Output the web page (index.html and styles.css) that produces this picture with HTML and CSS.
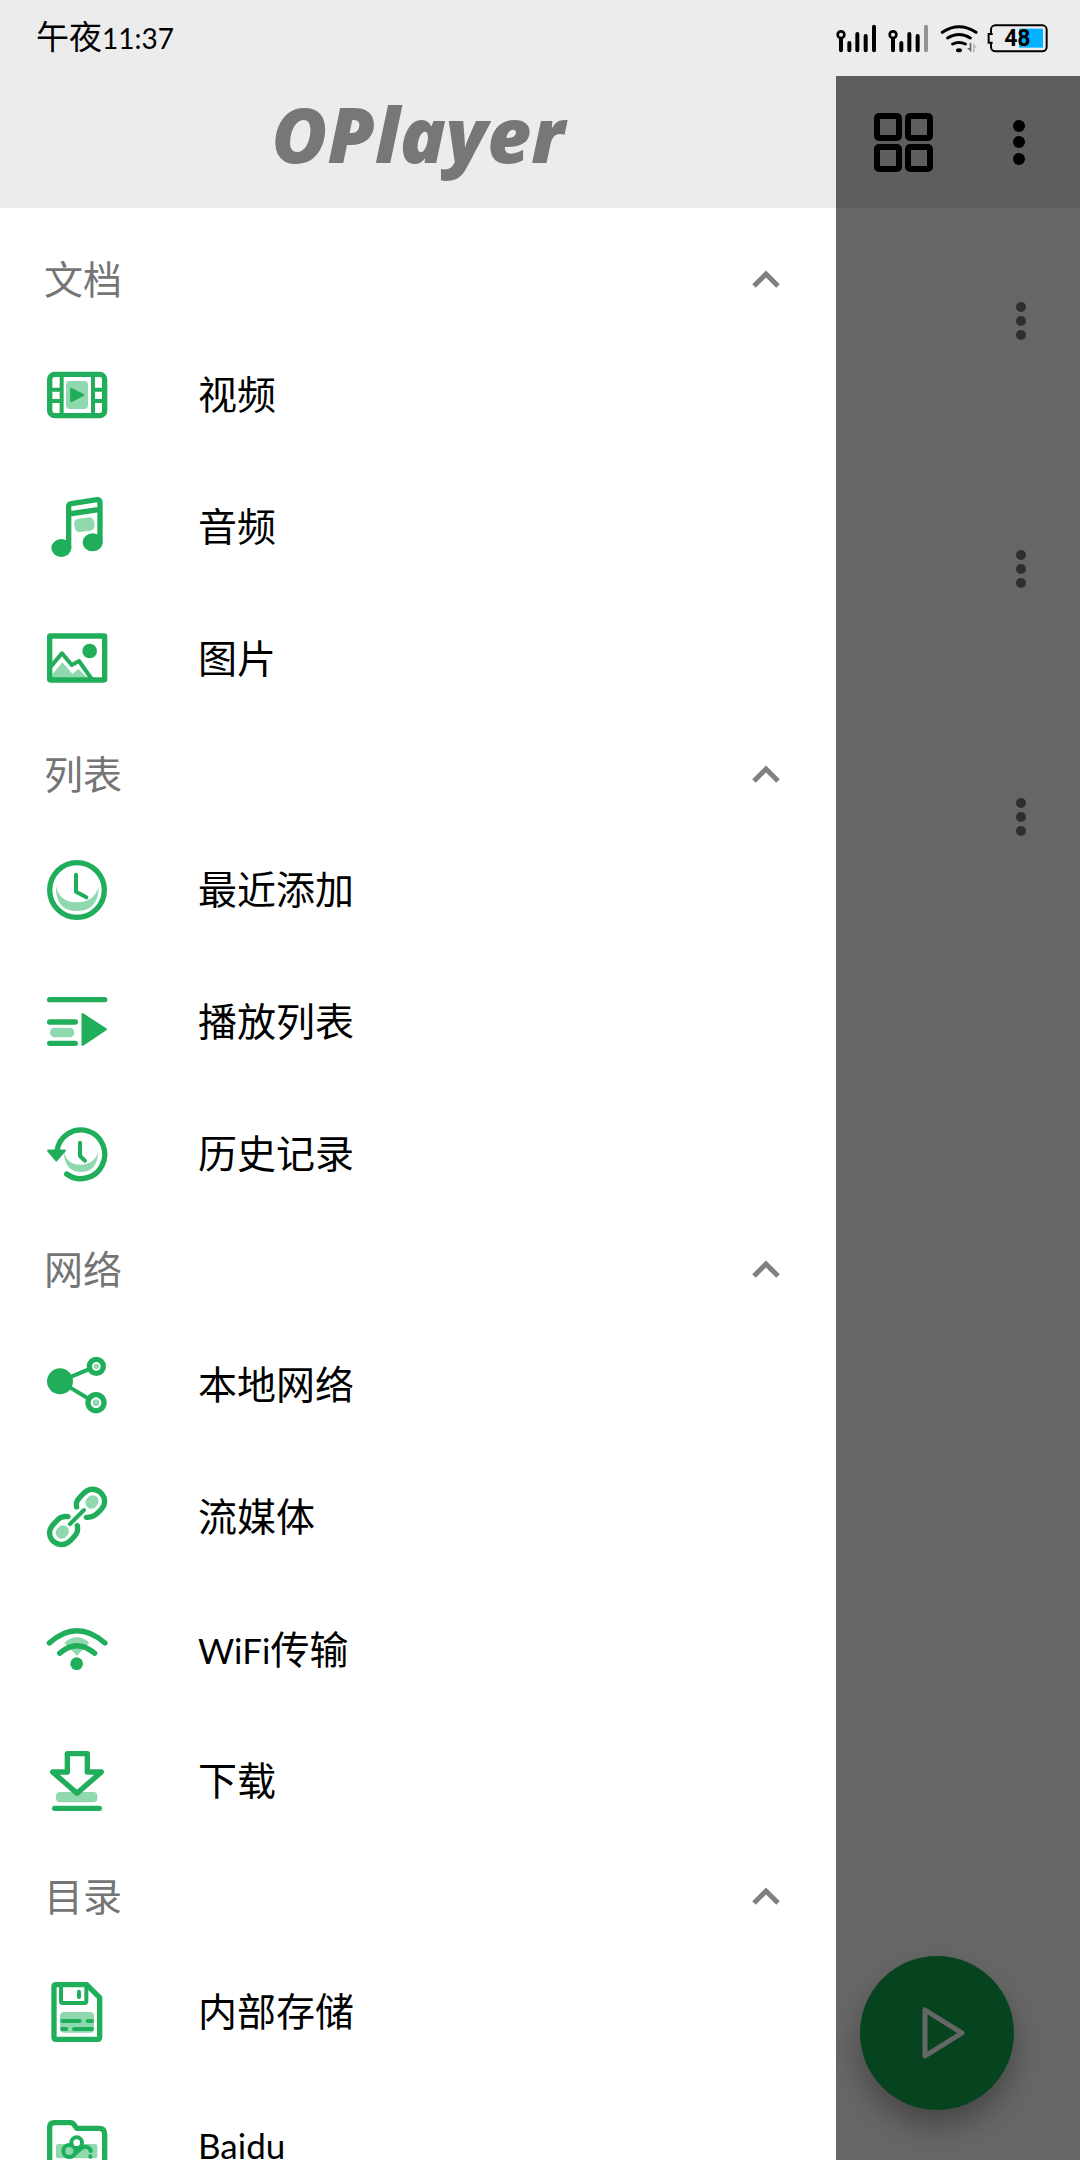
FILE: index.html
```html
<!DOCTYPE html>
<html lang="zh-CN">
<head>
<meta charset="utf-8">
<meta name="viewport" content="width=device-width, initial-scale=1">
<title>OPlayer</title>
<link rel="stylesheet" href="styles.css">
</head>
<body>
<header class="status">
  <span class="clock">午夜<span class="digits">11:37</span></span>
  <svg class="status-icons" viewBox="105 60 645 105" aria-label="信号 Wi-Fi 电量">
    <g fill="none" stroke="#000" stroke-width="12" stroke-linecap="round">
      <circle cx="123" cy="101" r="10" stroke-width="8"/>
      <path d="M123 114V148M148 126V148M172 99V148M197 105V148M222 77V148"/>
      <circle cx="279" cy="101" r="10" stroke-width="8"/>
      <path d="M279 114V148M304 126V148M328 99V148M353 105V148"/>
      <path d="M378 77V148" stroke="#929292"/>
      <path d="M427 94Q477 60 528 94M443 111Q477 90 511 111M458 129Q477 120 496 129" stroke-width="9"/>
    </g>
    <ellipse cx="477" cy="148" rx="9" ry="6"/>
    <path d="M509 126h5v28l-13-13h8z" fill="#666"/>
    <path d="M519 154v-28l12 14h-7v14z" fill="#bbb"/>
    <path d="M657 83h72v57h-72z" fill="#00b2ff"/>
    <rect x="573" y="73" width="167" height="78" rx="13" fill="none" stroke="#000" stroke-width="6"/>
    <path d="M571 99v26" stroke="#ececec" stroke-width="10"/>
    <path d="M578 99h-12v26h12" fill="none" stroke="#000" stroke-width="6"/>
    <text class="battery-text" x="652" y="136" text-anchor="middle">48</text>
  </svg>
</header>

<div class="app">
  <aside class="drawer">
    <div class="brand"><h1 class="logo">OPlayer</h1></div>
    <nav class="menu">
      <section>
        <button class="group" type="button" aria-expanded="true">文档<svg class="chevron" viewBox="0 0 36 36"><path d="M6 23 18 11 30 23"/></svg></button>
        <a class="item" href="#video"><svg class="icon" viewBox="123 390 216 216">
          <rect class="line" x="149" y="433" width="165" height="124" rx="15"/>
          <path class="line thin" d="M185 433v124M279 433v124M149 479h36M149 513h36M279 479h35M279 513h35"/>
          <rect class="tint" x="198" y="453" width="66" height="84" rx="11"/>
          <path class="solid round" d="M214 477v36l35-18z"/></svg>视频</a>
        <a class="item" href="#audio"><svg class="icon" viewBox="123 786 216 216">
          <rect class="tint" x="223" y="864" width="60" height="40" rx="14" transform="rotate(-7 253 884)"/>
          <path class="line" d="M206 953V829q0-7 8-8l77-12q9-1 9 8V936M206 852l94-14"/>
          <ellipse class="solid" cx="184" cy="954" rx="30" ry="27"/><ellipse class="solid" cx="278" cy="937" rx="30" ry="27"/></svg>音频</a>
        <a class="item" href="#image"><svg class="icon" viewBox="123 1182 216 216">
          <path class="tint" d="M156 1345v-11l31-37 31 35 17-15 29 28z"/>
          <path class="line thin" d="M149 1314 186 1270 215 1305 237 1293 277 1350" stroke-linejoin="miter"/>
          <rect class="line" x="149" y="1218" width="165" height="132" rx="2"/>
          <circle class="solid" cx="269" cy="1263" r="22"/></svg>图片</a>
      </section>
      <section>
        <button class="group" type="button" aria-expanded="true">列表<svg class="chevron" viewBox="0 0 36 36"><path d="M6 23 18 11 30 23"/></svg></button>
        <a class="item" href="#recent"><svg class="icon" viewBox="123 405 216 216">
          <circle class="line" cx="231" cy="510" r="82"/>
          <path class="tint" d="M168 497Q178 547 231 547T296 499Q296 573 231 573T168 497z"/>
          <path class="line thin" d="M228 464V515L259 532"/></svg>最近添加</a>
        <a class="item" href="#playlist"><svg class="icon" viewBox="123 801 216 216">
          <path class="line" d="M149 839H314M149 906H226M149 970H226"/>
          <rect class="tint" x="150" y="923" width="73" height="29" rx="14"/>
          <path class="solid round" d="M248 883v91l69-46z"/></svg>播放列表</a>
        <a class="item" href="#history"><svg class="icon" viewBox="123 1197 216 216">
          <path class="line" d="M171 1293A72 73 0 1 1 200 1362"/>
          <path class="solid round" d="M145 1292h49l-25 29z"/>
          <path class="tint" d="M191 1295Q202 1334 242 1334T294 1297Q292 1356 243 1356T191 1295z"/>
          <path class="line thin" d="M240 1268V1308L255 1322"/></svg>历史记录</a>
      </section>
      <section>
        <button class="group" type="button" aria-expanded="true">网络<svg class="chevron" viewBox="0 0 36 36"><path d="M6 23 18 11 30 23"/></svg></button>
        <a class="item" href="#local"><svg class="icon" viewBox="123 390 216 216">
          <path class="line thin" d="M180 484 264 449M180 484 262 534"/>
          <circle class="solid" cx="180" cy="484" r="39"/>
          <circle class="line hole" cx="289" cy="439" r="21"/><circle class="tint" cx="289" cy="439" r="8"/>
          <circle class="line hole" cx="288" cy="548" r="24"/><circle class="tint" cx="288" cy="548" r="10"/></svg>本地网络</a>
        <a class="item" href="#stream"><svg class="icon" viewBox="123 786 216 216">
          <rect class="tint" x="-18" y="-21" width="36" height="42" rx="18" transform="translate(276 846) rotate(42)"/>
          <rect class="tint" x="-18" y="-21" width="36" height="42" rx="18" transform="translate(187 936) rotate(42)"/>
          <path class="line" d="M230 861C226 846 233 838 248 823 266 803 287 804 302 818 319 835 317 854 302 870 286 887 276 893 259 892M204 890C185 887 176 895 164 909 146 926 144 945 157 961 174 978 195 978 212 961 227 945 236 938 232 917"/>
          <path class="line thin" d="M210 912 252 870"/></svg>流媒体</a>
        <a class="item" href="#wifi"><svg class="icon" viewBox="123 102 216 216">
          <path class="tint" d="M193 188Q231 156 268 188L231 227z"/>
          <path class="line" d="M148 189Q230 116 315 189M179 220Q230 174 284 220"/>
          <circle class="solid" cx="230" cy="251" r="19"/></svg><span><span class="latin">WiFi</span>传输</span></a>
        <a class="item" href="#download"><svg class="icon" viewBox="123 498 216 216">
          <rect class="tint" x="168" y="636" width="124" height="31" rx="12"/>
          <path class="line hole" d="M202 521h60v55h42L231 640 158 576h44z"/>
          <path class="line" d="M164 685H298"/></svg>下载</a>
      </section>
      <section>
        <button class="group" type="button" aria-expanded="true">目录<svg class="chevron" viewBox="0 0 36 36"><path d="M6 23 18 11 30 23"/></svg></button>
        <a class="item" href="#storage"><svg class="icon" viewBox="123 351 216 216">
          <path class="line" d="M168 374h92l39 39v119q0 6-6 6H168q-6 0-6-6V380q0-6 6-6z"/>
          <path class="line thin" d="M183 375v49q0 5 5 5h66q5 0 5-5v-49M237 395v16"/>
          <rect class="tint" x="180" y="456" width="102" height="62" rx="12"/>
          <path class="line thin" d="M187 483h52M263 483h13M187 507h12M222 507h54"/></svg>内部存储</a>
        <a class="item" href="#baidu"><svg class="icon" viewBox="123 747 216 216">
          <path class="line" d="M149 920V802q0-14 14-14h48q7 0 12 7l7 10h67q17 0 17 17v98q0 14-14 14H163q-14 0-14-14z"/>
          <rect class="tint" x="168" y="852" width="124" height="43" rx="6"/>
          <circle class="line thin" cx="208" cy="873" r="18"/>
          <circle class="line thin hole" cx="230" cy="848" r="16"/>
          <path class="line thin" d="M220 887 240 868Q252 856 263 862 271 866 272 873M271 889v1"/></svg><span class="latin">Baidu</span></a>
      </section>
    </nav>
  </aside>

  <main class="page">
    <div class="toolbar">
      <button class="tool" type="button" aria-label="网格视图"><svg class="tool-icon" viewBox="0 0 60 60"><g fill="none" stroke="#000" stroke-width="6"><rect x="3" y="4" width="22" height="22" rx="2"/><rect x="34" y="4" width="22" height="22" rx="2"/><rect x="3" y="35" width="22" height="22" rx="2"/><rect x="34" y="35" width="22" height="22" rx="2"/></g></svg></button>
      <button class="tool" type="button" aria-label="更多"><svg class="tool-icon" viewBox="0 0 60 60"><circle cx="30" cy="14" r="6"/><circle cx="30" cy="30" r="6"/><circle cx="30" cy="47" r="6"/></svg></button>
    </div>
    <ul class="files">
      <li><button class="more" type="button" aria-label="选项"><svg viewBox="0 0 48 48"><circle cx="24" cy="10" r="5"/><circle cx="24" cy="24" r="5"/><circle cx="24" cy="38" r="5"/></svg></button></li>
      <li><button class="more" type="button" aria-label="选项"><svg viewBox="0 0 48 48"><circle cx="24" cy="10" r="5"/><circle cx="24" cy="24" r="5"/><circle cx="24" cy="38" r="5"/></svg></button></li>
      <li><button class="more" type="button" aria-label="选项"><svg viewBox="0 0 48 48"><circle cx="24" cy="10" r="5"/><circle cx="24" cy="24" r="5"/><circle cx="24" cy="38" r="5"/></svg></button></li>
    </ul>
    <button class="fab" type="button" aria-label="播放"><svg viewBox="0 0 154 154"><path d="M65 54v46l37-23z"/></svg></button>
    <div class="scrim"></div>
  </main>
</div>
</body>
</html>
```
FILE: styles.css
```css
* { box-sizing: border-box; }

body {
  margin: 0;
  height: 100vh;
  display: flex;
  flex-direction: column;
  overflow: hidden;
  background: #ececec;
  color: #000;
  font-family: "Liberation Sans", "Noto Sans CJK SC", sans-serif;
}

button {
  margin: 0;
  padding: 0;
  border: 0;
  background: none;
  font: inherit;
  color: inherit;
}

svg { display: block; }

.status {
  flex: none;
  height: 76px;
  padding: 0 30px 0 36px;
  display: flex;
  align-items: center;
  justify-content: space-between;
}

.clock { font-size: 33px; line-height: 44px; }
.digits { font-family: Lato, sans-serif; font-size: 28px; }

.status-icons { width: 215px; height: 35px; }
.battery-text { font: 700 69px Roboto, sans-serif; }

.app {
  flex: 1;
  min-height: 0;
  display: grid;
  grid-template-columns: minmax(0, 1fr) 244px;
}

.drawer {
  min-height: 0;
  display: flex;
  flex-direction: column;
  background: #fff;
}

.brand {
  flex: none;
  height: 132px;
  padding-bottom: 16px;
  display: flex;
  align-items: center;
  justify-content: center;
  background: #ececec;
}

.logo {
  margin: 0;
  color: #777;
  font: italic 800 76px/96px "Open Sans", sans-serif;
}

.menu {
  flex: 1;
  min-height: 0;
  padding-top: 23px;
  overflow-y: auto;
  scrollbar-width: none;
}

.group {
  width: 100%;
  height: 99px;
  padding: 0 52px 0 44px;
  display: flex;
  align-items: center;
  justify-content: space-between;
  color: #757575;
  font-size: 39px;
  line-height: 56px;
}

.chevron { width: 36px; height: 36px; }
.chevron path { fill: none; stroke: #808080; stroke-width: 5; }

.item {
  height: 132px;
  padding-left: 41px;
  display: flex;
  align-items: center;
  gap: 85px;
  color: #000;
  font-size: 39px;
  line-height: 56px;
  text-decoration: none;
}

.latin { font-family: Lato, sans-serif; font-size: 35px; }

.icon { flex: none; width: 72px; height: 72px; }

.line {
  fill: none;
  stroke: #20ae5b;
  stroke-width: 16;
  stroke-linecap: round;
  stroke-linejoin: round;
}
.thin { stroke-width: 12; }
.hole { fill: #fff; }
.tint { fill: #90d8ae; }
.solid { fill: #20ae5b; }
.round { stroke: #20ae5b; stroke-width: 7; stroke-linejoin: round; }

.page {
  position: relative;
  background: #fff;
  overflow: hidden;
}

.toolbar {
  height: 132px;
  padding: 0 25px 0 32px;
  display: flex;
  align-items: center;
  justify-content: space-between;
  background: #ececec;
}

.tool {
  width: 72px;
  height: 72px;
  display: grid;
  place-items: center;
}
.tool-icon { width: 60px; height: 60px; }

.files { margin: 0; padding: 0; list-style: none; }
.files li {
  height: 248px;
  padding: 89px 35px 0 0;
  display: flex;
  align-items: flex-start;
  justify-content: flex-end;
}
.more { width: 48px; height: 48px; }
.more svg { width: 48px; height: 48px; fill: #737373; }

.fab {
  position: absolute;
  right: 66px;
  bottom: 50px;
  width: 154px;
  height: 154px;
  border-radius: 50%;
  background: #0daa4e;
  box-shadow: 0 16px 28px rgba(0, 0, 0, 0.3);
}
.fab path {
  fill: none;
  stroke: #fff;
  stroke-width: 5;
  stroke-linejoin: round;
}

.scrim {
  position: absolute;
  inset: 0;
  background: rgba(0, 0, 0, 0.6);
}
```
